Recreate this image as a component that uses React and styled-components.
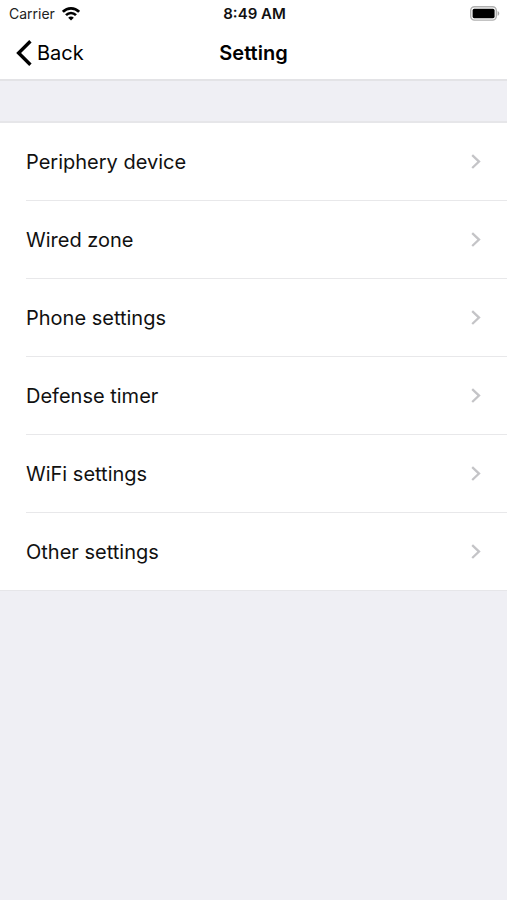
import React from "react";
import styled, { createGlobalStyle } from "styled-components";

const menus = [
  { id: "periphery", name: "Periphery device" },
  { id: "wired", name: "Wired zone" },
  { id: "phone", name: "Phone settings" },
  { id: "defense", name: "Defense timer" },
  { id: "wifi", name: "WiFi settings" },
  { id: "other", name: "Other settings" },
];

function App() {
  return (
    <>
      <GlobalStyle />
      <Wrap>
        <Header>
          <StatusBar>
            <Carrier>
              Carrier
              <WifiIcon />
            </Carrier>
            <Time>8:49 AM</Time>
            <BatteryIcon />
          </StatusBar>
          <NavBar>
            <BackButton type="button">
              <svg width="16" height="26" viewBox="0 0 16 26" aria-hidden="true">
                <path
                  d="M14.4 1.2 L2.6 13 L14.4 24.8"
                  fill="none"
                  stroke="#000"
                  strokeWidth="3.4"
                />
              </svg>
              Back
            </BackButton>
            <Title>Setting</Title>
          </NavBar>
        </Header>

        <MenuList>
          {menus.map((menu) => (
            <MenuItem key={menu.id}>
              <MenuLink href={`#${menu.id}`}>
                {menu.name}
                <svg width="12" height="16" viewBox="0 0 12 16" aria-hidden="true">
                  <path
                    d="M2.2 1.2 L9 7.6 L2.2 14"
                    fill="none"
                    stroke="#c4c4c7"
                    strokeWidth="2.3"
                  />
                </svg>
              </MenuLink>
            </MenuItem>
          ))}
        </MenuList>
      </Wrap>
    </>
  );
}

function WifiIcon() {
  return (
    <svg width="18" height="14" viewBox="0 0 18 14" aria-hidden="true">
      <g fill="none" stroke="#000" strokeWidth="2.6">
        <path d="M0.9 4.8 C5.4 0.2 12.6 0.2 17.1 4.8" />
        <path d="M4 8.2 C6.8 5.3 11.2 5.3 14 8.2" />
      </g>
      <path d="M9 13.6 L6.2 10.7 C7.7 9.2 10.3 9.2 11.8 10.7 Z" fill="#000" />
    </svg>
  );
}

function BatteryIcon() {
  return (
    <svg width="30" height="15" viewBox="0 0 30 15" aria-hidden="true">
      <rect
        x="0.7"
        y="0.7"
        width="25.6"
        height="13.4"
        rx="3.8"
        fill="#fff"
        stroke="#b0b0b0"
        strokeWidth="1.4"
      />
      <rect x="2.6" y="2.8" width="22" height="9.4" rx="1.6" fill="#000" />
      <path d="M27.6 5 C29.8 5.8 29.8 9 27.6 9.8 Z" fill="#a8a8a8" />
    </svg>
  );
}

const GlobalStyle = createGlobalStyle`
  * {
    box-sizing: border-box;
  }
  body {
    margin: 0;
    background-color: #efeff4;
    color: #000;
    font-family: Inter, "Liberation Sans", sans-serif;
  }
`;

const Wrap = styled.div`
  min-height: 100vh;
  background-color: #efeff4;
`;

const Header = styled.header`
  background-color: #fff;
  border-bottom: 2px solid #e3e3e6;
`;

const StatusBar = styled.div`
  display: grid;
  grid-template-columns: 1fr auto 1fr;
  align-items: center;
  height: 27px;
  padding: 0 7px 0 9px;

  & > svg {
    justify-self: end;
  }
`;

const Carrier = styled.span`
  display: flex;
  align-items: center;
  gap: 7px;
  color: #222;
  font-size: 14px;
`;

const Time = styled.span`
  color: #111;
  font-size: 15px;
  font-weight: 600;
`;

const NavBar = styled.nav`
  display: grid;
  grid-template-columns: 1fr auto 1fr;
  align-items: center;
  height: 52px;
  padding: 0 16px;
`;

const BackButton = styled.button`
  display: flex;
  align-items: center;
  justify-self: start;
  gap: 5px;
  padding: 0;
  border: 0;
  background: none;
  color: #000;
  font-family: inherit;
  font-size: 20px;
`;

const Title = styled.h1`
  margin: 0;
  font-size: 20px;
  font-weight: 600;
`;

const MenuList = styled.ul`
  margin: 40px 0 0;
  padding: 0;
  border-top: 2px solid #e6e6e9;
  border-bottom: 1px solid #e6e6e9;
  background-color: #fff;
  list-style: none;
`;

const MenuItem = styled.li`
  margin-left: 26px;

  & + & {
    border-top: 1px solid #e8e8ea;
  }
`;

const MenuLink = styled.a`
  display: flex;
  align-items: center;
  justify-content: space-between;
  height: 77px;
  padding-right: 25px;
  color: #111;
  font-size: 20px;
  text-decoration: none;
`;

export default App;
